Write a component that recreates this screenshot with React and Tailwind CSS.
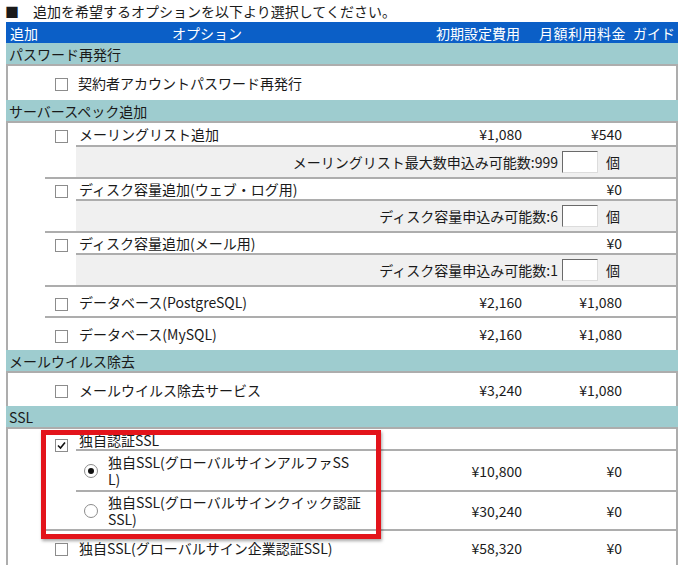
import React from "react";

const LINE = "border-[#adadad]";

function Check({ checked }) {
  return (
    <span className="inline-flex w-[13px] h-[13px] border border-[#8c8c8c] bg-white items-center justify-center shrink-0">
      {checked && (
        <svg width="11" height="11" viewBox="0 0 11 11">
          <path d="M2 5.5 L4.5 8 L9 2.5" fill="none" stroke="#111" strokeWidth="1.6" />
        </svg>
      )}
    </span>
  );
}

function Radio({ checked }) {
  return (
    <span className="inline-flex w-[14px] h-[14px] rounded-full border border-[#8c8c8c] bg-white items-center justify-center shrink-0">
      {checked && <span className="w-[6px] h-[6px] rounded-full bg-[#111]" />}
    </span>
  );
}

function Prices({ init, month }) {
  return (
    <>
      <div className="w-[100px] text-right shrink-0">{init}</div>
      <div className="w-[100px] text-right shrink-0">{month}</div>
      <div className="w-[54px] shrink-0" />
    </>
  );
}

function Section({ title }) {
  return (
    <div className={`h-[23px] bg-[#9ecccf] border-b-2 ${LINE} flex items-center pl-[3px]`}>{title}</div>
  );
}

function Item({ label, init, month, sub, h = 30, labelH = 24 }) {
  return (
    <div className={`ml-[37px] flex border-b-2 ${LINE}`}>
      <div className="w-[31px] shrink-0 pl-[10px] flex items-start" style={{ paddingTop: sub ? labelH / 2 - 4 : h / 2 - 5 }}>
        <Check />
      </div>
      <div className="flex-1">
        <div className="flex items-center pl-[3px]" style={{ height: sub ? labelH : h - 2 }}>
          <div className="flex-1">{label}</div>
          <Prices init={init} month={month} />
        </div>
        {sub && (
          <div className={`h-[32px] border-t-2 ${LINE} bg-[#f0f0f0] flex items-center justify-end pr-[56px]`}>
            <span>{sub}</span>
            <span className="ml-[4px] w-[36px] h-[22px] bg-white border border-t-[#6a6a6a] border-l-[#6a6a6a] border-r-[#dcdcdc] border-b-[#dcdcdc]" />
            <span className="ml-[8px]">個</span>
          </div>
        )}
      </div>
    </div>
  );
}

export default function App() {
  return (
    <div className="relative w-[689px] h-[566px] overflow-hidden bg-white text-[14px] leading-[16px] text-[#1a1a1a] font-['Noto_Sans_CJK_JP',sans-serif]">
      <div className="h-[22px] flex items-center pl-[5px]">
        <span>■</span>
        <span className="ml-[14px]">追加を希望するオプションを以下より選択してください。</span>
      </div>
      <div className="ml-[6px] w-[672px]">
        <div className="h-[21px] bg-[#0b5fc7] text-white flex items-center">
          <div className="w-[40px] pl-[4px] shrink-0">追加</div>
          <div className="w-[322px] text-center shrink-0">オプション</div>
          <div className="w-[156px] text-right pr-[4px] shrink-0">初期設定費用</div>
          <div className="w-[106px] text-right pr-[4px] shrink-0 tracking-[0.5px]">月額利用料金</div>
          <div className="flex-1 text-center">ガイド</div>
        </div>

        <Section title="パスワード再発行" />
        <div className={`border-x-2 ${LINE}`}>
          <div className="h-[34px] flex items-center pl-[47px]">
            <span className="mt-[3px] flex"><Check /></span>
            <span className="ml-[10px]">契約者アカウントパスワード再発行</span>
          </div>
        </div>

        <Section title="サーバースペック追加" />
        <div className={`border-x-2 ${LINE}`}>
          <Item label="メーリングリスト追加" init="¥1,080" month="¥540" sub="メーリングリスト最大数申込み可能数:999" labelH={22} />
          <Item label="ディスク容量追加(ウェブ・ログ用)" init="" month="¥0" sub="ディスク容量申込み可能数:6" labelH={20} />
          <Item label="ディスク容量追加(メール用)" init="" month="¥0" sub="ディスク容量申込み可能数:1" labelH={20} />
          <Item label="データベース(PostgreSQL)" init="¥2,160" month="¥1,080" h={31} />
          <div className="ml-[37px] flex">
            <div className="w-[31px] shrink-0 pl-[10px] pt-[11px]"><Check /></div>
            <div className="flex-1 flex items-center pl-[3px] h-[32px]">
              <div className="flex-1">データベース(MySQL)</div>
              <Prices init="¥2,160" month="¥1,080" />
            </div>
          </div>
        </div>

        <Section title="メールウイルス除去" />
        <div className={`border-x-2 ${LINE}`}>
          <div className="ml-[37px] flex">
            <div className="w-[31px] shrink-0 pl-[10px] pt-[11px]"><Check /></div>
            <div className="flex-1 flex items-center pl-[3px] h-[33px]">
              <div className="flex-1">メールウイルス除去サービス</div>
              <Prices init="¥3,240" month="¥1,080" />
            </div>
          </div>
        </div>

        <Section title="SSL" />
        <div className={`border-x-2 ${LINE}`}>
          <div className={`ml-[37px] flex border-b-2 ${LINE}`}>
            <div className="w-[31px] shrink-0 pl-[10px] pt-[8px]"><Check checked /></div>
            <div className="flex-1">
              <div className={`h-[22px] flex items-center pl-[3px] pt-[2px] border-b-2 ${LINE}`}>独自認証SSL</div>
              <div className={`h-[41px] flex items-center border-b-2 ${LINE}`}>
                <div className="w-[32px] shrink-0 pl-[8px] flex"><Radio checked /></div>
                <div className="flex-1 whitespace-nowrap leading-[17px]">独自SSL(グローバルサインアルファSS<br />L)</div>
                <Prices init="¥10,800" month="¥0" />
              </div>
              <div className="h-[37px] flex items-center">
                <div className="w-[32px] shrink-0 pl-[8px] flex"><Radio /></div>
                <div className="flex-1 whitespace-nowrap leading-[17px]">独自SSL(グローバルサインクイック認証<br />SSL)</div>
                <Prices init="¥30,240" month="¥0" />
              </div>
            </div>
          </div>
          <div className="ml-[37px] flex">
            <div className="w-[31px] shrink-0 pl-[10px] pt-[11px]"><Check /></div>
            <div className="flex-1 flex items-center pl-[3px] h-[34px]">
              <div className="flex-1">独自SSL(グローバルサイン企業認証SSL)</div>
              <Prices init="¥58,320" month="¥0" />
            </div>
          </div>
        </div>
      </div>

      <div className="absolute left-[41px] top-[430px] w-[340px] h-[109px] border-[5px] border-[#e3141b] shadow-[1px_2px_3px_rgba(0,0,0,0.35)]" />
    </div>
  );
}
